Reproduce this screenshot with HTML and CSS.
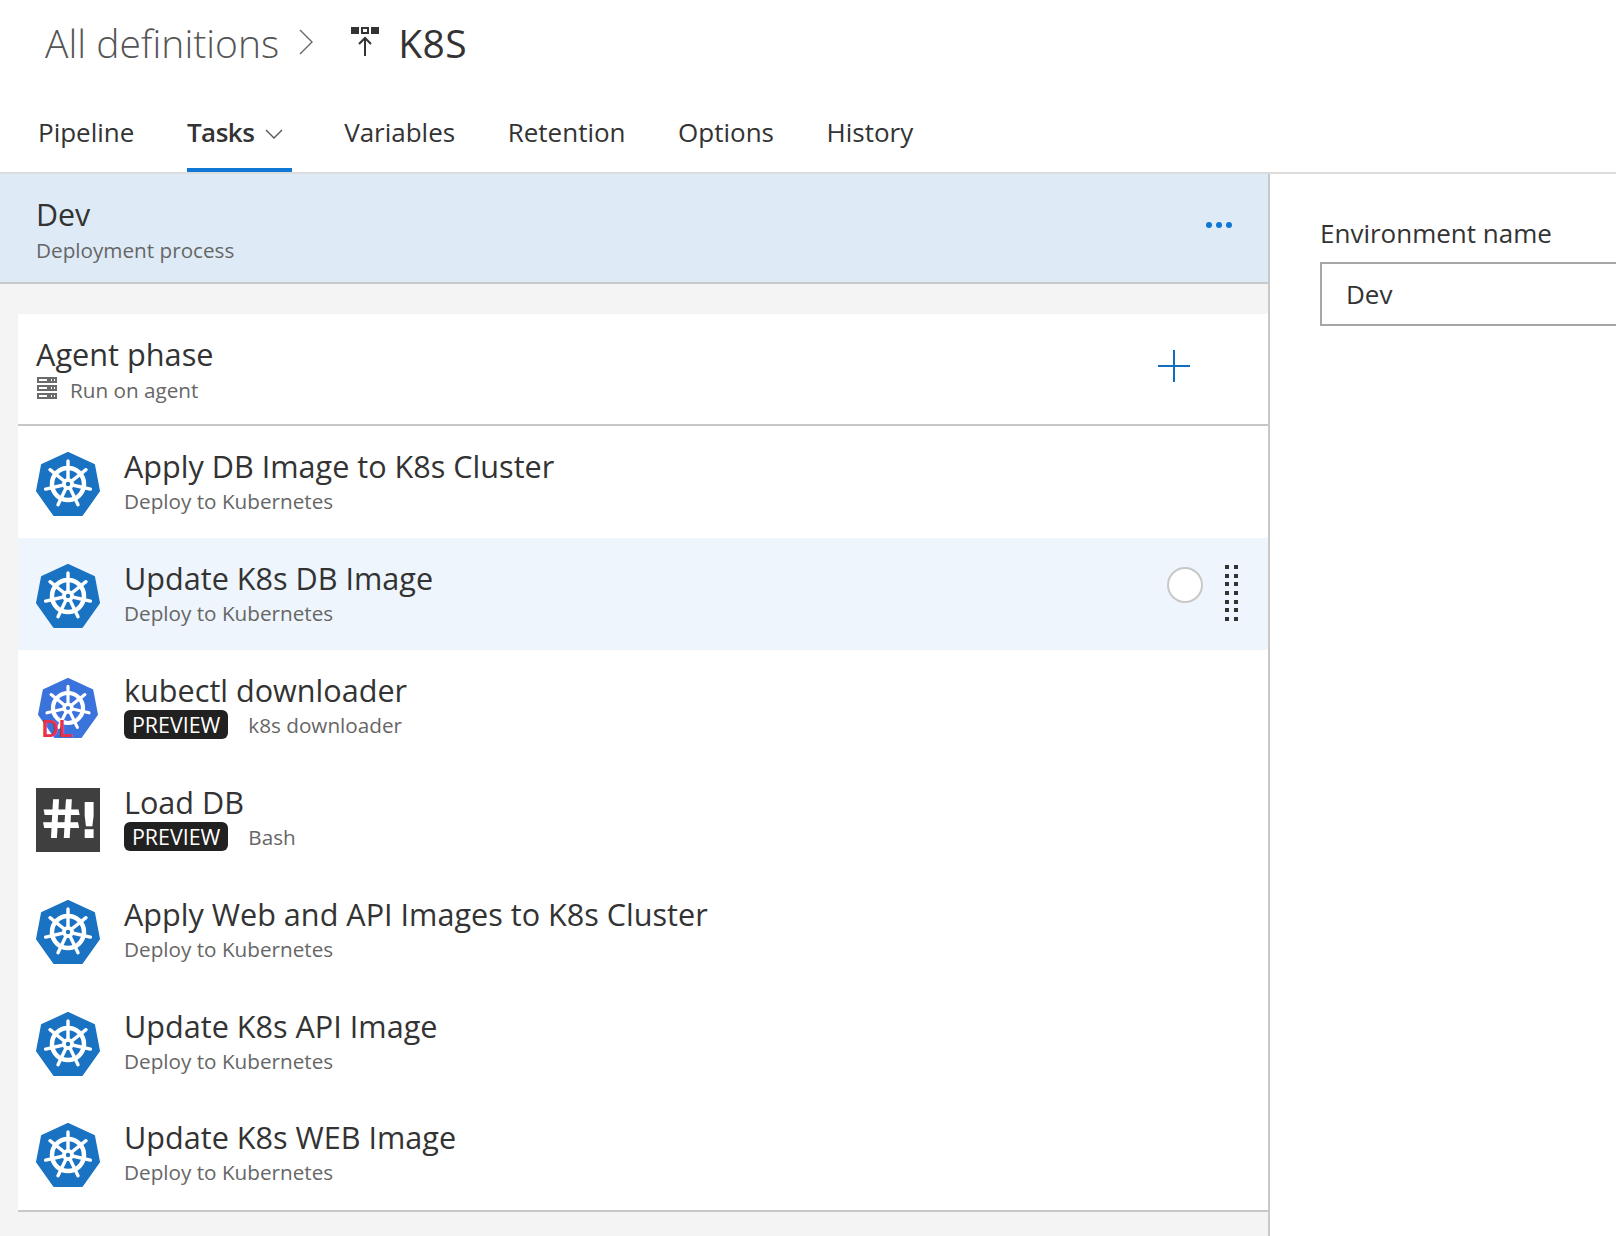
FILE: index.html
```html
<!DOCTYPE html>
<html lang="en">
  <head>
    <meta charset="UTF-8" />
    <title>K8S - Release definition</title>
    <link rel="stylesheet" href="styles.css">
  </head>
  <body>
    <svg class="defs" width="0" height="0">
      <symbol id="wheel" viewBox="0 0 64 64">
        <g fill="none" stroke="#fff">
          <circle cx="32" cy="32" r="16" stroke-width="4.5" />
          <path stroke-width="3.4" stroke-linecap="round" d="M32 32V9M32 32L50 17.7M32 32L54.4 37.1M32 32L42 52.7M32 32L22 52.7M32 32L9.6 37.1M32 32L14 17.7" />
        </g>
        <circle cx="32" cy="32" r="6" fill="#fff" />
      </symbol>
    </svg>

    <div class="title-row">
      <span class="crumb">All definitions</span>
      <svg class="crumb-sep" width="16" height="30" viewBox="0 0 16 30">
        <path d="M2 3L14 15L2 27" fill="none" stroke="#666" stroke-width="1.4" />
      </svg>
      <svg class="release-icon" width="30" height="30" viewBox="0 0 30 30">
        <rect x="0" y="0" width="8" height="7" fill="#333" />
        <rect x="11" y="1" width="6" height="5" fill="none" stroke="#333" stroke-width="2" />
        <rect x="20" y="0" width="8" height="7" fill="#333" />
        <path d="M14 29V11M8 17L14 11L20 17" fill="none" stroke="#333" stroke-width="2" />
      </svg>
      <span class="def-name">K8S</span>
    </div>

    <nav class="tabs">
      <a class="tab">Pipeline</a>
      <a class="tab active">Tasks
        <svg width="18" height="10" viewBox="0 0 18 10">
          <path d="M1 1L9 9L17 1" fill="none" stroke="#555" stroke-width="1.3" />
        </svg>
      </a>
      <a class="tab">Variables</a>
      <a class="tab">Retention</a>
      <a class="tab">Options</a>
      <a class="tab">History</a>
    </nav>

    <div class="main">
      <div class="left">
        <div class="env-head">
          <div>
            <div class="env-name">Dev</div>
            <div class="sub">Deployment process</div>
          </div>
          <div class="more"><i></i><i></i><i></i></div>
        </div>

        <div class="phase-list">
          <div class="phase">
            <div>
              <div class="phase-name">Agent phase</div>
              <div class="sub phase-sub">
                <svg width="20" height="22" viewBox="0 0 20 22">
                  <rect width="20" height="6" fill="#6b6b6b" />
                  <rect y="8" width="20" height="6" fill="#6b6b6b" />
                  <rect y="16" width="20" height="6" fill="#6b6b6b" />
                  <path d="M2 3H10M14 3H15M17 3H18M2 11H10M14 11H15M17 11H18M2 19H10M14 19H15M17 19H18" stroke="#fff" stroke-width="2" />
                </svg>
                Run on agent
              </div>
            </div>
            <svg class="plus" width="32" height="32" viewBox="0 0 32 32">
              <path d="M16 0V32M0 16H32" stroke="#106ebe" stroke-width="2" />
            </svg>
          </div>

          <div class="task">
            <svg class="k8s" viewBox="0 0 64 64">
              <path class="hept" d="M32 1L58 13L63 39L46 63H18L1 39L6 13Z" />
              <use href="#wheel" />
              <circle class="hub" cx="32" cy="32" r="2.2" />
            </svg>
            <div class="task-text">
              <div class="task-name">Apply DB Image to K8s Cluster</div>
              <div class="sub">Deploy to Kubernetes</div>
            </div>
          </div>

          <div class="task hover">
            <svg class="k8s" viewBox="0 0 64 64">
              <path class="hept" d="M32 1L58 13L63 39L46 63H18L1 39L6 13Z" />
              <use href="#wheel" />
              <circle class="hub" cx="32" cy="32" r="2.2" />
            </svg>
            <div class="task-text">
              <div class="task-name">Update K8s DB Image</div>
              <div class="sub">Deploy to Kubernetes</div>
            </div>
            <div class="task-tools">
              <span class="toggle"></span>
              <div class="grip">
                <i></i><i></i><i></i><i></i><i></i><i></i><i></i>
                <i></i><i></i><i></i><i></i><i></i><i></i><i></i>
              </div>
            </div>
          </div>

          <div class="task">
            <svg class="k8s small" viewBox="0 0 64 64">
              <path class="hept blue2" d="M32 1L58 13L63 39L46 63H18L1 39L6 13Z" />
              <use href="#wheel" />
              <circle class="hub blue2" cx="32" cy="32" r="2.2" />
              <text class="dl" x="4" y="63">DL</text>
            </svg>
            <div class="task-text">
              <div class="task-name">kubectl downloader</div>
              <div class="sub"><span class="badge">PREVIEW</span>k8s downloader</div>
            </div>
          </div>

          <div class="task">
            <div class="bash-icon"><span class="hash">#</span>!</div>
            <div class="task-text">
              <div class="task-name">Load DB</div>
              <div class="sub"><span class="badge">PREVIEW</span>Bash</div>
            </div>
          </div>

          <div class="task">
            <svg class="k8s" viewBox="0 0 64 64">
              <path class="hept" d="M32 1L58 13L63 39L46 63H18L1 39L6 13Z" />
              <use href="#wheel" />
              <circle class="hub" cx="32" cy="32" r="2.2" />
            </svg>
            <div class="task-text">
              <div class="task-name">Apply Web and API Images to K8s Cluster</div>
              <div class="sub">Deploy to Kubernetes</div>
            </div>
          </div>

          <div class="task">
            <svg class="k8s" viewBox="0 0 64 64">
              <path class="hept" d="M32 1L58 13L63 39L46 63H18L1 39L6 13Z" />
              <use href="#wheel" />
              <circle class="hub" cx="32" cy="32" r="2.2" />
            </svg>
            <div class="task-text">
              <div class="task-name">Update K8s API Image</div>
              <div class="sub">Deploy to Kubernetes</div>
            </div>
          </div>

          <div class="task">
            <svg class="k8s" viewBox="0 0 64 64">
              <path class="hept" d="M32 1L58 13L63 39L46 63H18L1 39L6 13Z" />
              <use href="#wheel" />
              <circle class="hub" cx="32" cy="32" r="2.2" />
            </svg>
            <div class="task-text">
              <div class="task-name">Update K8s WEB Image</div>
              <div class="sub">Deploy to Kubernetes</div>
            </div>
          </div>
        </div>
      </div>

      <div class="right">
        <label class="field-label" for="env-name">Environment name</label>
        <input class="field" id="env-name" type="text" value="Dev" />
      </div>
    </div>
  </body>
</html>
```

FILE: styles.css
```css
/* General */
html,
body {
  margin: 0;
  padding: 0;
  height: 1236px;
  overflow: hidden;
}

body {
  font-family: "Open Sans", "Noto Sans", sans-serif;
  color: #333;
  background: #fff;
}

.defs {
  position: absolute;
}

/* Title row */
.title-row {
  height: 84px;
  display: flex;
  align-items: center;
  padding-left: 45px;
}

.crumb {
  font-size: 39px;
  font-weight: 300;
  color: #555;
}

.crumb-sep {
  margin-left: 19px;
}

.release-icon {
  margin-left: 37px;
}

.def-name {
  font-size: 39px;
  margin-left: 17px;
  letter-spacing: 0.5px;
}

/* Tabs */
.tabs {
  height: 88px;
  display: flex;
  gap: 52.5px;
  padding-left: 38px;
  border-bottom: 2px solid #dcdcdc;
}

.tab {
  font-size: 26px;
  line-height: 78px;
  height: 88px;
  padding-top: 9px;
  box-sizing: border-box;
}

.tab.active {
  font-weight: 600;
  letter-spacing: -0.5px;
  padding-right: 9px;
  border-bottom: 4px solid #0f78d4;
}

.tab.active svg {
  margin-left: 4px;
  vertical-align: 3px;
}

/* Layout */
.main {
  display: flex;
  height: 1062px;
}

.left {
  width: 1268px;
  flex: none;
  background: #f4f4f4;
  border-right: 2px solid #c8c8c8;
}

.right {
  flex: 1;
  min-width: 0;
  padding: 41px 0 0 50px;
  overflow: hidden;
}

/* Environment header */
.env-head {
  height: 110px;
  box-sizing: border-box;
  display: flex;
  justify-content: space-between;
  align-items: center;
  padding: 3px 36px 0;
  background: #deebf6;
  border-bottom: 2px solid #c8c8c8;
}

.env-name {
  font-size: 30.4px;
  line-height: 40px;
}

.more {
  display: flex;
  gap: 4px;
  margin-bottom: 9px;
}

.more i {
  width: 6px;
  height: 6px;
  border-radius: 50%;
  background: #0f78d4;
}

.sub {
  font-size: 20.7px;
  line-height: 30px;
  color: #666;
}

/* Phase and tasks */
.phase-list {
  margin-left: 18px;
  padding-top: 30px;
}

.phase {
  height: 112px;
  box-sizing: border-box;
  display: flex;
  justify-content: space-between;
  align-items: center;
  padding: 0 78px 0 18px;
  background: #fff;
  border-bottom: 2px solid #c8c8c8;
}

.phase-name {
  font-size: 30.7px;
  line-height: 42px;
}

.phase-sub {
  display: flex;
  align-items: center;
  gap: 13px;
}

.phase-sub svg {
  margin: -4px 0 0 1px;
}

.plus {
  margin-bottom: 6px;
}

.task {
  height: 112px;
  box-sizing: border-box;
  display: flex;
  align-items: center;
  gap: 24px;
  padding-left: 18px;
  background: #fff;
}

.task:last-child {
  height: 114px;
  padding-bottom: 2px;
  border-bottom: 2px solid #c8c8c8;
}

.task.hover {
  background: #eef5fc;
}

.task-text {
  margin-bottom: 2px;
}

.task-name {
  font-size: 30.6px;
  line-height: 39px;
}

.k8s {
  width: 64px;
  height: 64px;
  flex: none;
  margin-top: 4px;
}

.k8s.small {
  width: 60px;
  height: 60px;
  margin-left: 2px;
  margin-right: 2px;
  overflow: visible;
}

.hept {
  fill: #1a73c2;
  stroke: #1a73c2;
  stroke-width: 2;
  stroke-linejoin: round;
}

.hub {
  fill: #1a73c2;
}

.hept.blue2 {
  fill: #3b73dc;
  stroke: #3b73dc;
}

.hub.blue2 {
  fill: #3b73dc;
}

.dl {
  font-family: "Liberation Sans", sans-serif;
  font-size: 25px;
  font-weight: 700;
  fill: #e8314a;
}

.bash-icon {
  width: 64px;
  height: 64px;
  flex: none;
  box-sizing: border-box;
  margin-top: 4px;
  padding-left: 3px;
  background: #3f3f3f;
  color: #fff;
  font-family: "DejaVu Sans", sans-serif;
  font-size: 50px;
  font-weight: 700;
  line-height: 64px;
  white-space: nowrap;
}

.hash {
  display: inline-block;
  font-size: 54px;
  margin-right: -6.5px;
  transform: skewX(11deg);
}

.badge {
  display: inline-block;
  height: 29px;
  line-height: 29px;
  padding: 0 8px;
  margin-right: 20px;
  background: #212121;
  color: #fff;
  border-radius: 6px;
  font-size: 21.4px;
}

.task-tools {
  margin-left: auto;
  margin-right: 30px;
  display: flex;
  align-items: center;
  gap: 22px;
}

.toggle {
  width: 32px;
  height: 32px;
  border: 2px solid #c8c8c8;
  border-radius: 50%;
  background: #fff;
  margin-bottom: 18px;
}

.grip {
  display: grid;
  grid-template-columns: 4px 4px;
  grid-template-rows: repeat(7, 4px);
  grid-auto-flow: column;
  column-gap: 5px;
  row-gap: 4.67px;
  margin-bottom: 2px;
}

.grip i {
  background: #333;
}

/* Right side form */
.field-label {
  display: block;
  font-size: 26px;
  line-height: 36px;
  margin-bottom: 11px;
}

.field {
  display: block;
  width: 500px;
  height: 64px;
  box-sizing: border-box;
  border: 2px solid #a6a6a6;
  padding: 0 24px;
  font-family: inherit;
  font-size: 26px;
  color: #333;
  outline: none;
}
```
